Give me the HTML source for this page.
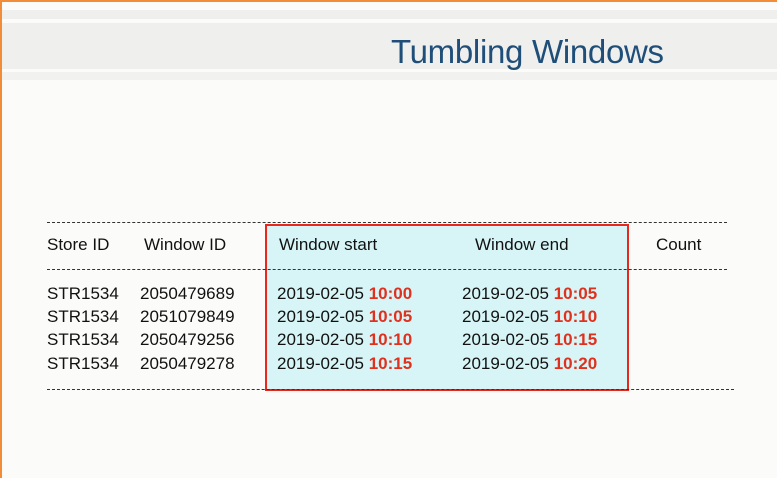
<!DOCTYPE html>
<html><head><style>
body{margin:0;width:777px;height:478px;background:#fbfbf9;position:relative;overflow:hidden;font-family:"Liberation Sans",sans-serif;color:#111}
.a{position:absolute}
.t{position:absolute;font-size:17px;line-height:20px;white-space:nowrap}
.r{color:#e0301e;font-weight:bold}
.dash{position:absolute;height:0;border-top:1px dashed #333}
</style></head><body>
<div class="a" style="left:0;top:0;width:777px;height:2px;background:#f28c38"></div>
<div class="a" style="left:0;top:0;width:2px;height:478px;background:#f28c38"></div>
<div class="a" style="left:2px;top:10px;width:775px;height:9px;background:#eff0ee"></div>
<div class="a" style="left:2px;top:23px;width:775px;height:46px;background:#eff0ee"></div>
<div class="a" style="left:2px;top:72px;width:775px;height:8px;background:#f1f2f0"></div>
<div class="a" style="left:391px;top:32px;font-size:33px;line-height:40px;color:#1f4e79;letter-spacing:-0.3px;white-space:nowrap">Tumbling Windows</div>
<div class="a" style="left:265px;top:224px;width:360px;height:163px;background:#d7f5f6;border:2px solid #e8281c"></div>
<div class="dash" style="left:47px;top:222px;width:680px"></div>
<div class="dash" style="left:47px;top:269px;width:680px"></div>
<div class="dash" style="left:47px;top:389px;width:687px"></div>
<div class="t" style="left:47px;top:235px">Store ID</div>
<div class="t" style="left:144px;top:235px">Window ID</div>
<div class="t" style="left:279px;top:235px">Window start</div>
<div class="t" style="left:475px;top:235px">Window end</div>
<div class="t" style="left:656px;top:235px">Count</div>
<div class="t" style="left:47px;top:284px">STR1534</div><div class="t" style="left:140px;top:284px">2050479689</div>
<div class="t" style="left:277px;top:284px">2019-02-05 <span class="r">10:00</span></div><div class="t" style="left:462px;top:284px">2019-02-05 <span class="r">10:05</span></div>
<div class="t" style="left:47px;top:307px">STR1534</div><div class="t" style="left:140px;top:307px">2051079849</div>
<div class="t" style="left:277px;top:307px">2019-02-05 <span class="r">10:05</span></div><div class="t" style="left:462px;top:307px">2019-02-05 <span class="r">10:10</span></div>
<div class="t" style="left:47px;top:330px">STR1534</div><div class="t" style="left:140px;top:330px">2050479256</div>
<div class="t" style="left:277px;top:330px">2019-02-05 <span class="r">10:10</span></div><div class="t" style="left:462px;top:330px">2019-02-05 <span class="r">10:15</span></div>
<div class="t" style="left:47px;top:354px">STR1534</div><div class="t" style="left:140px;top:354px">2050479278</div>
<div class="t" style="left:277px;top:354px">2019-02-05 <span class="r">10:15</span></div><div class="t" style="left:462px;top:354px">2019-02-05 <span class="r">10:20</span></div>
</body></html>
